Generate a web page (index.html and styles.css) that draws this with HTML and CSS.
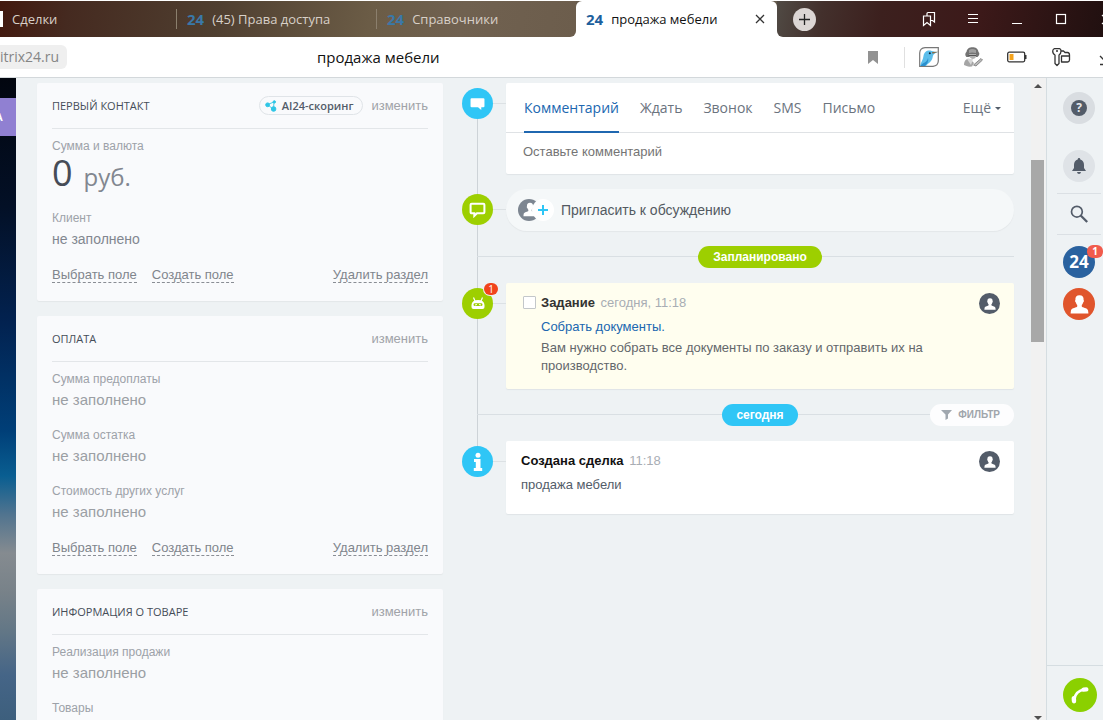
FILE: index.html
```html
<!DOCTYPE html>
<html lang="ru">
<head>
<meta charset="utf-8">
<title>продажа мебели</title>
<link rel="stylesheet" href="styles.css">
</head>
<body>
<svg class="sprite" aria-hidden="true">
  <symbol id="person" viewBox="0 0 20 20">
    <path d="M10 0.300C6.800 0.300 5.400 2.200 5.700 5.200C5 5.600 5.400 7.600 6.200 7.900C6.500 9.200 7 9.900 7.600 10.400V12C7 13.300 1.800 13.200 1 16.200L0.600 19.500H19.400L19 16.200C18.200 13.200 13 13.300 12.400 12V10.400C13 9.900 13.500 9.200 13.800 7.900C14.600 7.600 15 5.600 14.300 5.200C14.600 2.200 13.200 0.300 10 0.300Z" fill="currentColor"/>
  </symbol>
</svg>

<header class="tabs">
  <nav class="tabs-left">
    <a class="tab tab-cut" href="#"><span class="favicon-cut"></span>Сделки</a>
    <a class="tab" href="#"><b class="logo24">24</b>(45) Права доступа</a>
    <a class="tab" href="#"><b class="logo24">24</b>Справочники</a>
  </nav>
  <div class="tab-slot">
    <div class="tab-active">
      <b class="logo24">24</b><span class="tab-name">продажа мебели</span>
      <button class="plain" aria-label="Закрыть вкладку">
        <svg width="10" height="10" viewBox="0 0 10 10" fill="none" stroke="#333" stroke-width="1.300"><path d="M1 1L9 9M9 1L1 9"/></svg>
      </button>
    </div>
  </div>
  <div class="tabs-right">
    <button class="new-tab" aria-label="Новая вкладка">
      <svg width="11" height="11" viewBox="0 0 11 11" stroke="#222" stroke-width="1.300"><path d="M5.500 0V11M0 5.500H11"/></svg>
    </button>
    <div class="icon-row">
      <button class="plain" aria-label="Коллекции">
        <svg width="20" height="20" viewBox="0 0 20 20" fill="none" stroke="#fff" stroke-width="1.200"><path d="M4.500 7H11.500V16.500L8 13.500L4.500 16.500ZM8 7V4.500Q8 3.500 9 3.500H15.500V13L13.500 11.500H11.500"/></svg>
      </button>
      <button class="plain" aria-label="Меню">
        <svg width="20" height="20" viewBox="0 0 20 20" stroke="#fff" stroke-width="1"><path d="M5 5.500H15M5 9.500H15M5 13.500H15"/></svg>
      </button>
      <button class="plain" aria-label="Свернуть">
        <svg width="20" height="20" viewBox="0 0 20 20" stroke="#fff" stroke-width="1"><path d="M5 14.500H15"/></svg>
      </button>
      <button class="plain" aria-label="Развернуть">
        <svg width="20" height="20" viewBox="0 0 20 20" fill="none" stroke="#fff" stroke-width="1.200"><rect x="5.500" y="5.500" width="9" height="9"/></svg>
      </button>
      <button class="plain" aria-label="Закрыть">
        <svg width="20" height="20" viewBox="0 0 20 20" stroke="#fff" stroke-width="1.200"><path d="M7 6L16 15M16 6L7 15"/></svg>
      </button>
    </div>
  </div>
</header>

<div class="toolbar">
  <a class="host" href="#">itrix24.ru</a>
  <span class="page-name">продажа мебели</span>
  <button class="plain bookmark" aria-label="Закладка">
    <svg width="10" height="13" viewBox="0 0 10 13" fill="#929292"><path d="M0 0H10V13L5 9L0 13Z"/></svg>
  </button>
  <div class="icon-row">
    <button class="plain" aria-label="Колибри">
      <svg width="20" height="20" viewBox="0 0 20 20"><path d="M6 0.700H19.300V14Q19 19 14 19.300H0.700V6Q1 1 6 0.700Z" fill="#fff" stroke="#777" stroke-width="1.200"/><path d="M1 19C2 15 4 13 4.500 9C5 5 8 3 11.500 3.600C13.500 4 14.500 5.200 19 5C15 6.200 14 8 13.500 11C12.500 15 9 16 7 19Z" fill="#5bbdea"/><path d="M1.500 19C4 15 8 16 9 11C10 14 8 17 6 19Z" fill="#2a8fce"/><path d="M13 5L19.500 4.800L13.500 6.800Z" fill="#8a6a45"/><circle cx="10.800" cy="6.300" r="1" fill="#123"/></svg>
    </button>
    <button class="plain" aria-label="Детектив">
      <svg width="20" height="20" viewBox="0 0 20 20"><path d="M3.500 10C1.500 8 2.500 5.500 3.500 5C4 1.500 6.500 0.300 9.500 0.300S15 1.500 15.500 5C17 6 16.500 8.500 14.500 10Z" fill="#737373"/><path d="M6 3Q9 1 13 3V6Q9 5 6 6Z" fill="#a0a0a0"/><path d="M6 7H13V10Q10 14 6.500 10Z" fill="#b0b0b0"/><path d="M5.500 8.500H13" stroke="#555"/><path d="M1 18C1 13 4 11 7 12L11 16L9 19.500C5 20 3 19 1 18Z" fill="#a5a5a5"/><path d="M4 12L8 18L10 12Z" fill="#d8d8d8"/><path d="M10.500 18L18 11.500L19.500 13L13 19Z" fill="#bbb" stroke="#777" stroke-width="0.800"/></svg>
    </button>
    <button class="plain" aria-label="Энергосбережение">
      <svg width="20" height="20" viewBox="0 0 20 20"><rect x="0.700" y="5.200" width="17" height="9.600" rx="1.500" fill="#fff" stroke="#333" stroke-width="1.300"/><rect x="2.500" y="7" width="4" height="6" fill="#f5a31c"/><path d="M18 8H19.500V12H18Z" fill="#333"/></svg>
    </button>
    <button class="plain" aria-label="Пароли">
      <svg width="20" height="20" viewBox="0 0 20 20" fill="none" stroke="#333" stroke-width="1.300" stroke-linejoin="round"><path d="M3.500 1.700H8.500Q10 2 10 4Q10 7 8 8V16.500L6 18.500L4 16.500V8Q1.700 7 1.700 4Q2 2 3.500 1.700ZM5 4H7M10 4H12.500L14 5.500H16.500Q18.500 5.700 18.500 8V13Q18.300 15 16.500 15H10.500V9H18"/></svg>
    </button>
    <button class="plain" aria-label="Загрузки">
      <svg width="20" height="20" viewBox="0 0 20 20" fill="none" stroke="#333" stroke-width="1.300"><path d="M10 3V14M5 9L10 14L15 9M5 17.500H15"/></svg>
    </button>
  </div>
</div>

<div class="page">
  <aside class="wallpaper"><span class="wallpaper-label">А</span></aside>

  <main class="deal">
    <div class="fields">
      <section class="card">
        <div class="card-head">
          <h2>Первый контакт</h2>
          <button class="scoring">
            <svg width="12" height="12" viewBox="0 0 12 12" fill="#2fc6e6" stroke="#2fc6e6"><path d="M2.500 4.500L9 2M2.500 4.500L8.500 9.500M9 2L8.500 9" stroke-width="0.900"/><circle cx="2.600" cy="4.800" r="1.900"/><circle cx="9.300" cy="1.900" r="1.200"/><circle cx="8.600" cy="9" r="2.300"/></svg>
            AI24-скоринг</button>
          <button class="edit">изменить</button>
        </div>
        <dl>
          <dt>Сумма и валюта</dt>
          <dd class="money">0 <small>руб.</small></dd>
          <dt>Клиент</dt>
          <dd class="client">не заполнено</dd>
        </dl>
        <div class="card-foot">
          <button class="dashed">Выбрать поле</button>
          <button class="dashed">Создать поле</button>
          <button class="dashed remove">Удалить раздел</button>
        </div>
      </section>

      <section class="card">
        <div class="card-head">
          <h2>Оплата</h2>
          <button class="edit">изменить</button>
        </div>
        <dl>
          <dt>Сумма предоплаты</dt>
          <dd>не заполнено</dd>
          <dt>Сумма остатка</dt>
          <dd>не заполнено</dd>
          <dt>Стоимость других услуг</dt>
          <dd>не заполнено</dd>
        </dl>
        <div class="card-foot">
          <button class="dashed">Выбрать поле</button>
          <button class="dashed">Создать поле</button>
          <button class="dashed remove">Удалить раздел</button>
        </div>
      </section>

      <section class="card">
        <div class="card-head">
          <h2>Информация о товаре</h2>
          <button class="edit">изменить</button>
        </div>
        <dl>
          <dt>Реализация продажи</dt>
          <dd>не заполнено</dd>
          <dt>Товары</dt>
        </dl>
      </section>
    </div>

    <div class="timeline">
      <div class="event">
        <span class="node blue">
          <svg width="15" height="15" viewBox="0 0 14 14" fill="#fff"><path d="M1.500 2H12.500Q13.500 2 13.500 3V9.500Q13.500 10.500 12.500 10.500H10.500V13L7.500 10.500H1.500Q0.500 10.500 0.500 9.500V3Q0.500 2 1.500 2Z"/></svg>
        </span>
        <section class="panel composer">
          <nav class="modes">
            <a class="mode current" href="#">Комментарий</a>
            <a class="mode" href="#">Ждать</a>
            <a class="mode" href="#">Звонок</a>
            <a class="mode" href="#">SMS</a>
            <a class="mode" href="#">Письмо</a>
            <button class="mode more">Ещё <span class="caret"></span></button>
          </nav>
          <input class="comment" type="text" placeholder="Оставьте комментарий" aria-label="Оставьте комментарий">
        </section>
      </div>

      <div class="event">
        <span class="node green">
          <svg width="17" height="17" viewBox="0 0 16 16" fill="none" stroke="#fff" stroke-width="1.900"><path d="M2.500 2.500H13.500Q14.500 2.500 14.500 3.500V10.500Q14.500 11.500 13.500 11.500H7.500L5 14V11.500H2.500Q1.500 11.500 1.500 10.500V3.500Q1.500 2.500 2.500 2.500Z"/></svg>
        </span>
        <button class="invite">
          <svg width="36" height="22" viewBox="0 0 36 22"><circle cx="11" cy="11" r="11" fill="#7d8691"/><svg x="5" y="3" width="14" height="15" color="#fff"><use href="#person"/></svg><circle cx="25" cy="11" r="11" fill="#fff"/><path d="M25 6V16M20 11H30" stroke="#2fc6f6" stroke-width="2"/></svg>
          Пригласить к обсуждению
        </button>
      </div>

      <div class="divider"><span class="pill planned">Запланировано</span></div>

      <div class="event">
        <span class="node green">
          <svg width="14" height="14" viewBox="0 0 14 14"><path d="M2.500 0.500L4 4M11.500 0.500L10 4" stroke="#fff" stroke-width="1.200"/><path d="M0.500 10V8Q1 3 7 3T13.500 8V10Q13.500 12 11.500 12H2.500Q0.500 12 0.500 10Z" fill="#fff"/><rect x="2.500" y="6.300" width="9" height="2.800" rx="1.400" fill="#9dcf00"/><path d="M4 8L6 7.500M8 7.500L10 8" stroke="#fff" stroke-width="1"/></svg>
          <span class="count">1</span>
        </span>
        <section class="panel task">
          <input type="checkbox" id="task-done" class="tick">
          <div class="panel-body">
            <div><label for="task-done">Задание</label> <time>сегодня, 11:18</time></div>
            <a class="task-link" href="#">Собрать документы.</a>
            <p class="task-text">Вам нужно собрать все документы по заказу и отправить их на производство.</p>
          </div>
          <span class="avatar"><svg width="12" height="12"><use href="#person"/></svg></span>
        </section>
      </div>

      <div class="divider">
        <span class="pill today">сегодня</span>
        <button class="filter">
          <svg width="11" height="10" viewBox="0 0 11 10" fill="#a0a7af"><path d="M0 0H11L7 4.500V8.500L4.500 10V4.500Z"/></svg>
          Фильтр</button>
      </div>

      <div class="event">
        <span class="node blue">
          <svg width="12" height="20" viewBox="0 0 12 20" fill="#fff"><circle cx="6" cy="3.200" r="2.500"/><path d="M2 7H8.500V16H10.200V19H1.800V16H3.800V10H2Z"/></svg>
        </span>
        <section class="panel created">
          <div class="panel-body">
            <div><strong>Создана сделка</strong> <time>11:18</time></div>
            <p class="created-text">продажа мебели</p>
          </div>
          <span class="avatar"><svg width="12" height="12"><use href="#person"/></svg></span>
        </section>
      </div>
    </div>
  </main>

  <div class="scrollbar" aria-hidden="true">
    <span class="arrow-up"></span>
    <span class="thumb"></span>
    <span class="arrow-down"></span>
  </div>

  <aside class="rail">
    <button class="round help" aria-label="Помощь"><span class="question">?</span></button>
    <button class="round bell" aria-label="Уведомления">
      <svg width="14" height="16" viewBox="0 0 14 16" fill="#535c69"><path d="M7 0Q8.300 0 8.300 1.400Q12 2.500 12 7V10L14 13H0L2 10V7Q2 2.500 5.700 1.400Q5.700 0 7 0ZM5 14H9Q8.700 16 7 16T5 14Z"/></svg>
    </button>
    <button class="search" aria-label="Поиск">
      <svg width="18" height="18" viewBox="0 0 18 18" fill="none" stroke="#535c69"><circle cx="6.900" cy="6.700" r="5.400" stroke-width="1.700"/><path d="M10.700 10.500L17.200 17" stroke-width="2.300"/></svg>
    </button>
    <button class="round chat24" aria-label="Битрикс24">24<span class="count rail-count">1</span></button>
    <button class="round contact" aria-label="Контакт"><svg width="19" height="19"><use href="#person"/></svg></button>
    <div class="rail-bottom">
      <button class="round call" aria-label="Позвонить">
        <svg width="20" height="20" viewBox="0 0 20 20" fill="none" stroke="#fff" stroke-linecap="round"><path d="M4.500 14Q5.500 6 14.500 4.500" stroke-width="2.600"/><path d="M3.800 13.200L4 16.200M13.500 4.600L16.300 4.400" stroke-width="4.400"/></svg>
      </button>
    </div>
  </aside>
</div>
</body>
</html>
```

FILE: styles.css
```css
* { box-sizing: border-box; }

body {
  margin: 0;
  height: 100vh;
  display: flex;
  flex-direction: column;
  overflow: hidden;
  background: #eef2f4;
  color: #535c69;
  font: 13px/18px "Liberation Sans", Arial, sans-serif;
}

a { color: inherit; text-decoration: none; }
button { margin: 0; padding: 0; border: 0; background: none; color: inherit; font: inherit; }
h2, p, dl, dd { margin: 0; }
svg { display: block; flex: none; }
.sprite { position: absolute; width: 0; height: 0; }
.plain { display: flex; align-items: center; justify-content: center; }

/* Browser tabs */
.tabs {
  flex: none;
  display: flex;
  height: 37px;
  padding-top: 1px;
  background: #fff;
  font: 13px/18px "Open Sans", "Noto Sans", sans-serif;
  overflow: hidden;
}
.tabs-left {
  display: flex;
  width: 576px;
  border-bottom-right-radius: 6px;
  background: linear-gradient(100deg, #42190f 0, #452a20 12%, #4f3f30 38%, #6b5c46 64%, #706150 80%, #6c5d4c 100%);
  color: #d8d0c8;
}
.tab { display: flex; align-items: center; width: 200px; gap: 8px; background: linear-gradient(#8b7f6d, #8b7f6d) 0 50% / 1px 20px no-repeat; padding-left: 11px; }
.tab-cut { width: 176px; gap: 9px; padding-left: 0; background: none; }
.favicon-cut { width: 3px; height: 16px; background: #fff; }
.logo24 { color: #3a78a8; font-size: 15px; }
.tab-slot { width: 201px; background: linear-gradient(#655a4c, #655a4c) 0 0 / 100% 10px no-repeat; }
.tab-active {
  display: flex;
  align-items: center;
  height: 100%;
  gap: 8px;
  padding: 0 12px 0 10px;
  border-radius: 6px 6px 0 0;
  background: #fff;
  color: #111;
}
.tab-active .logo24 { color: #1d609c; }
.tab-name { flex: 1; }
.tabs-right {
  flex: 1;
  display: flex;
  align-items: center;
  justify-content: space-between;
  padding-left: 16px;
  border-bottom-left-radius: 6px;
  background: linear-gradient(100deg, #504a44 0, #43302c 14%, #3c201e 32%, #3c1919 62%, #211010 100%);
}
.new-tab { display: flex; align-items: center; justify-content: center; width: 23px; height: 23px; border-radius: 50%; background: #dcd6d4; }
.icon-row { display: flex; align-items: center; gap: 24px; margin-right: -12px; }

/* Address bar */
.toolbar {
  flex: none;
  display: flex;
  align-items: center;
  height: 41px;
  border-bottom: 1px solid #d3d8db;
  background: #fff;
  font: 15px/24px "Open Sans", "Noto Sans", sans-serif;
  overflow: hidden;
}
.host { width: 67px; border-radius: 0 6px 6px 0; background: #efefef; color: #858585; font-size: 14px; }
.page-name { flex: 1; padding-left: 250px; color: #111; }
.bookmark { padding: 4px 26px 4px 0; margin-right: 14px; border-right: 1px solid #e0e0e0; }

/* Page frame */
.page { flex: 1; display: flex; min-height: 0; }
.wallpaper {
  flex: none;
  width: 16px;
  padding-top: 20px;
  overflow: hidden;
  background: linear-gradient(#02060f 0, #031026 20%, #022250 38%, #003f78 55%, #095e91 62%, #51748f 68%, #858b90 74%, #788289 80%, #637786 86%, #456587 93%, #3d5f7d 100%);
}
.wallpaper-label {
  display: flex;
  align-items: center;
  justify-content: flex-start;
  height: 38px;
  background: #9080d2;
  color: #fff;
  font-size: 11px;
  font-weight: bold;
  text-indent: -5px;
}
.deal {
  flex: 1;
  display: grid;
  grid-template-columns: minmax(0, 406fr) minmax(0, 552fr);
  gap: 19px;
  padding: 5px 17px 0 21px;
  overflow: hidden;
}

/* Field cards */
.fields { display: flex; flex-direction: column; gap: 15px; }
.card { flex: none; padding: 0 15px 18px; border-radius: 2px; background: #f9fafc; box-shadow: 0 1px 1px #e3e7e9; }
.card-head { display: flex; align-items: center; gap: 8px; height: 46px; border-bottom: 1px solid #e3e6e9; }
.card-head h2 { flex: 1; color: #454d58; font: 500 11px/18px "Open Sans", sans-serif; text-transform: uppercase; }
.edit { color: #a0a3a8; font-size: 13px; }
.scoring {
  display: flex;
  align-items: center;
  gap: 5px;
  height: 19px;
  padding: 0 9px 0 5px;
  border: 1px solid #e0e4e8;
  border-radius: 10px;
  font: 600 11px/16px "Open Sans", sans-serif;
}
.card dl { padding-top: 8px; }
.card dt { color: #9da2a9; font-size: 12px; line-height: 18px; }
.card dd { margin-bottom: 14px; color: #9b9fa4; font-size: 15px; line-height: 24px; }
.card .client { color: #828790; font-size: 14px; }
.card .money { display: flex; align-items: baseline; gap: 11px; height: 40px; color: #464c57; font: 36px/36px "Open Sans", sans-serif; }
.money small { color: #828790; font-size: 24px; }
.card-foot { display: flex; gap: 15px; padding-top: 2px; }
.dashed { height: 16px; border-bottom: 1px dashed #898d94; color: #80858c; line-height: 14px; }
.remove { margin-left: auto; }

/* Timeline */
.timeline {
  align-self: start;
  display: flex;
  flex-direction: column;
  gap: 15px;
  background: linear-gradient(#cdd3d7, #cdd3d7) 15px 20px / 1px calc(100% - 60px) no-repeat;
}
.event { display: flex; align-items: flex-start; gap: 13px; background: linear-gradient(#dce1e4, #dce1e4) 15px 20px / 30px 1px no-repeat; }
.node { flex: none; position: relative; display: flex; align-items: center; justify-content: center; width: 31px; height: 31px; margin-top: 5px; border-radius: 50%; }
.blue { background: #2fc6f6; }
.green { background: #9dcf00; }
.count {
  position: absolute;
  top: -5px;
  right: -5px;
  width: 14px;
  height: 12px;
  border-radius: 6px;
  background: #f1441b;
  color: #fff;
  font: 10px/12px "Open Sans", sans-serif;
  text-align: center;
  box-shadow: 0 0 0 1px #eef2f4;
}
.panel { flex: 1; min-width: 0; border-radius: 2px; background: #fff; box-shadow: 0 1px 1px #dfe4e7; }
.modes { display: flex; gap: 21px; height: 50px; padding: 0 13px 0 18px; border-bottom: 1px solid #dfe2e5; }
.mode { height: 50px; font: 14px/50px "Open Sans", sans-serif; color: #6b737e; }
.current { border-bottom: 2px solid #1f67b0; color: #2067b0; }
.more { display: flex; align-items: center; gap: 4px; margin-left: auto; }
.caret { border: 3px solid transparent; border-top-color: #535c69; border-bottom: 0; }
.comment { display: block; width: 100%; height: 41px; padding: 0 17px 4px; border: 0; background: none; color: #333; font: inherit; }
.comment::placeholder { color: #747474; opacity: 1; }
.invite {
  flex: 1;
  display: flex;
  align-items: center;
  gap: 7px;
  height: 42px;
  padding: 0 12px;
  border-radius: 21px;
  background: #f5f8f9;
  box-shadow: 0 1px 1px #e3e7e9;
  color: #535a62;
  font-size: 14px;
}
.divider {
  display: grid;
  grid-template-columns: minmax(0, 1fr) auto minmax(0, 1fr);
  padding-left: 44px;
  background: linear-gradient(#d9dfe3, #d9dfe3) 15px 10px / 100% 1px no-repeat;
}
.pill { grid-column: 2; height: 22px; border-radius: 11px; color: #fff; font-weight: bold; font-size: 12px; line-height: 22px; }
.planned { padding: 0 15px; background: #9dcf00; }
.today { padding: 0 14px; background: #2fc6f6; }
.filter {
  justify-self: end;
  display: flex;
  align-items: center;
  gap: 6px;
  height: 22px;
  padding: 0 14px 0 11px;
  border-radius: 11px;
  background: #fdfdfe;
  color: #a0a5ab;
  font: bold 10px/22px "Liberation Sans", Arial, sans-serif;
  text-transform: uppercase;
}
.task { display: flex; gap: 5px; padding: 11px 14px 14px 17px; background: #fffeef; }
.tick { appearance: none; flex: none; width: 13px; height: 13px; margin: 2px 0 0; border: 1px solid #c3c7ca; border-radius: 1px; background: #fff; }
.panel-body { flex: 1; min-width: 0; }
.task label { color: #333; font-weight: bold; }
time { margin-left: 2px; color: #a8adb4; }
.task-link { display: block; margin-top: 6px; color: #2067b0; }
.task-text { margin: 3px -21px 0 0; color: #63676b; }
.avatar { flex: none; display: flex; align-items: center; justify-content: center; width: 21px; height: 21px; margin-top: -1px; border-radius: 50%; background: #535c69; color: #fff; }
.created { display: flex; padding: 11px 14px 20px 15px; }
.created strong { color: #111; }
.created-text { margin-top: 6px; }

/* Scrollbar */
.scrollbar { flex: none; display: flex; flex-direction: column; width: 15px; padding: 6px 2px 0 0; background: #f1f1f1; }
.arrow-up { align-self: center; border: 4px solid transparent; border-top: 0; border-bottom-color: #505050; }
.thumb { height: 182px; margin: 72px 0 auto; background: #a8a8a8; }
.arrow-down { align-self: center; border: 4px solid transparent; border-bottom: 0; border-top-color: #505050; }

/* Right rail */
.rail { flex: none; display: flex; flex-direction: column; width: 57px; padding: 14px 0 0 16px; border-left: 1px solid #d5dde1; overflow: hidden; }
.round { flex: none; position: relative; display: flex; align-items: center; justify-content: center; width: 32px; height: 32px; border-radius: 50%; color: #fff; }
.help { background: #d9dde1; }
.question { width: 16px; height: 16px; border-radius: 50%; background: #535c69; color: #e6e9ec; font: bold 12px/16px "Open Sans", sans-serif; }
.bell { margin-top: 26px; background: #dfe3e7; }
.search { flex: none; display: flex; align-items: center; justify-content: center; width: 44px; height: 42px; margin: 11px 0 0 -6px; border: solid #dbe0e4; border-width: 1px 0; }
.chat24 { margin-top: 11px; background: #2a629f; font: bold 17px/24px "Open Sans", sans-serif; }
.rail-count { top: -1px; right: -8px; width: 16px; height: 13px; background: #f15b4c; font-weight: bold; box-shadow: none; }
.contact { margin-top: 10px; background: #e0552c; }
.rail-bottom { margin: auto 0 0 -16px; padding: 12px 0 8px 16px; border-top: 1px solid #d5dde1; }
.call { width: 34px; height: 34px; background: #8bd000; }
```
